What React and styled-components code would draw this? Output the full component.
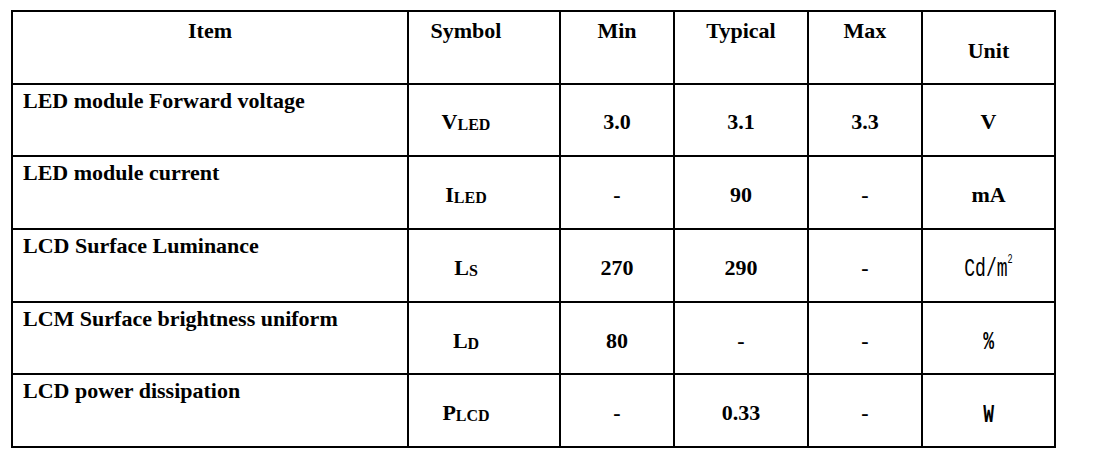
import React from "react";
import styled, { createGlobalStyle } from "styled-components";

const GlobalStyle = createGlobalStyle`
  html, body {
    margin: 0;
    padding: 0;
    background: #fff;
  }
  body {
    font-family: "Liberation Serif", "Times New Roman", serif;
    color: #000;
  }
`;

const Page = styled.div`
  padding: 10px 0 0 11px;
`;

const Table = styled.table`
  border-collapse: collapse;
  table-layout: fixed;
  width: 1043px;
  font-weight: bold;
  font-size: 22px;
`;

const Cell = styled.td`
  border: 2px solid #000;
  height: 72.7px;
  box-sizing: border-box;
  padding: ${(p) => (p.$label ? "4px 0 0 10px" : p.$symbol ? "5px 36px 0 0" : "5px 0 0 0")};
  text-align: ${(p) => (p.$label ? "left" : "center")};
  vertical-align: ${(p) => (p.$top ? "top" : "middle")};
  line-height: 1.1;
  white-space: nowrap;
`;

const Head = styled(Cell).attrs({ as: "th" })`
  font-weight: bold;
  padding-top: ${(p) => (p.$top ? "7px" : "8px")};
`;

const Sub = styled.span`
  font-size: 16px;
  position: relative;
  top: 1px;
`;

const Mono = styled.span`
  display: inline-block;
  font-family: "Liberation Mono", "DejaVu Sans Mono", monospace;
  font-weight: ${(p) => (p.$thin ? "normal" : "bold")};
  font-size: 19px;
  transform: scale(0.95, 1.35);
`;

const Sup = styled.sup`
  font-size: 9px;
  vertical-align: 9px;
`;

const rows = [
  { item: "LED module Forward voltage", sym: "V", sub: "LED", min: "3.0", typ: "3.1", max: "3.3", unit: "V" },
  { item: "LED module current", sym: "I", sub: "LED", min: "-", typ: "90", max: "-", unit: "mA" },
  {
    item: "LCD Surface Luminance",
    sym: "L",
    sub: "S",
    min: "270",
    typ: "290",
    max: "-",
    unit: (
      <Mono $thin>
        Cd/m<Sup>2</Sup>
      </Mono>
    ),
  },
  { item: "LCM Surface brightness uniform", sym: "L", sub: "D", min: "80", typ: "-", max: "-", unit: <Mono>%</Mono> },
  { item: "LCD power dissipation", sym: "P", sub: "LCD", min: "-", typ: "0.33", max: "-", unit: <Mono>W</Mono> },
];

const App = () => {
  return (
    <Page>
      <GlobalStyle />
      <Table>
        <colgroup>
          <col style={{ width: 396 }} />
          <col style={{ width: 152 }} />
          <col style={{ width: 114 }} />
          <col style={{ width: 134 }} />
          <col style={{ width: 114 }} />
          <col style={{ width: 133 }} />
        </colgroup>
        <thead>
          <tr>
            <Head $top>Item</Head>
            <Head $top $symbol>
              Symbol
            </Head>
            <Head $top>Min</Head>
            <Head $top>Typical</Head>
            <Head $top>Max</Head>
            <Head>Unit</Head>
          </tr>
        </thead>
        <tbody>
          {rows.map((r) => (
            <tr key={r.item}>
              <Cell $label $top>
                {r.item}
              </Cell>
              <Cell $symbol>
                {r.sym}
                <Sub>{r.sub}</Sub>
              </Cell>
              <Cell>{r.min}</Cell>
              <Cell>{r.typ}</Cell>
              <Cell>{r.max}</Cell>
              <Cell>{r.unit}</Cell>
            </tr>
          ))}
        </tbody>
      </Table>
    </Page>
  );
};

export default App;
